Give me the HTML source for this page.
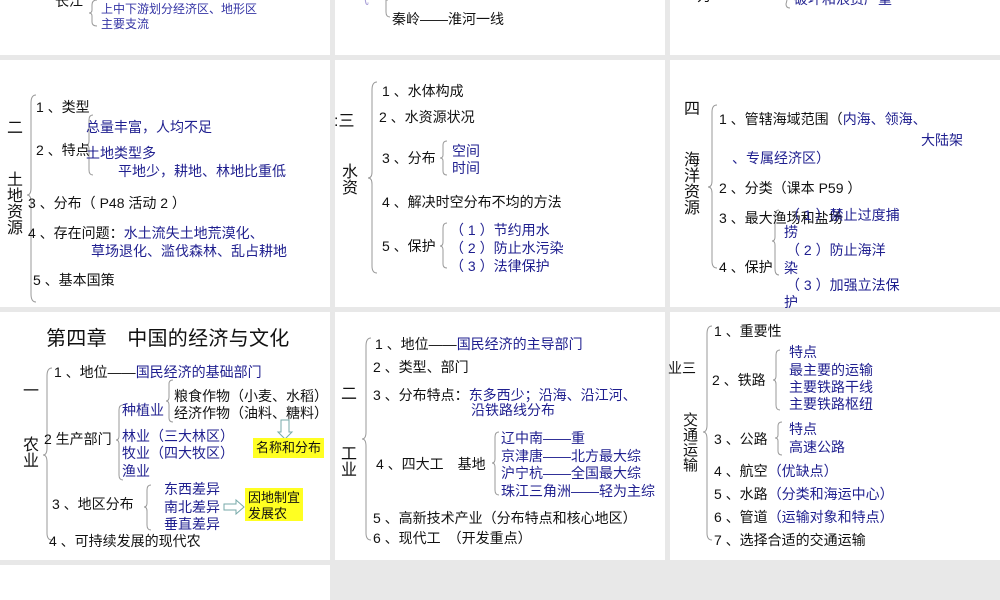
<!DOCTYPE html>
<html><head><meta charset="utf-8"><style>
*{margin:0;padding:0}
body{width:1000px;height:600px;background:#e8e8e8;position:relative;overflow:hidden;font-family:"Liberation Sans","Noto Sans CJK SC",sans-serif;color:#111}
.p{position:absolute;background:#fff;overflow:hidden}
.t{position:absolute;font-size:14px;line-height:16px;white-space:nowrap}
.s{font-size:13px}
.b{color:#1f1f8f}
.v{position:absolute;font-size:16px;line-height:16px;width:18px;white-space:normal;word-break:break-all}
.y{position:absolute;background:#ffff22;font-size:13px;line-height:16px;padding:2px 3px}
svg{position:absolute;left:0;top:0}
</style></head><body>
<div class="p" style="left:0;top:0;width:330px;height:55px"></div>
<div class="p" style="left:335px;top:0;width:330px;height:55px"></div>
<div class="p" style="left:670px;top:0;width:330px;height:55px"></div>
<div class="p" style="left:0;top:60px;width:330px;height:247px"></div>
<div class="p" style="left:335px;top:60px;width:330px;height:247px"></div>
<div class="p" style="left:670px;top:60px;width:330px;height:247px"></div>
<div class="p" style="left:0;top:312px;width:330px;height:248px"></div>
<div class="p" style="left:335px;top:312px;width:330px;height:248px"></div>
<div class="p" style="left:670px;top:312px;width:330px;height:248px"></div>
<div class="p" style="left:0;top:565px;width:330px;height:35px"></div>

<svg width="1000" height="600" fill="none" stroke="#999" stroke-width="1">
<path d="M97 0 Q92 0 92 5 L92 10 Q92 13 89 13 Q92 13 92 16 L92 22 Q92 26 97 26"/>
<path d="M388 0 L386 0 L386 12 Q386 17 390 17"/>
<path d="M787 0 L786 4 Q786 8 790 8"/>
<path d="M36 95 Q31 95 31 103 L31 188 Q31 195 27 195 Q31 195 31 202 L31 294 Q31 302 36 302"/>
<path d="M93 115 Q89 115 89 120 L89 141 Q89 145 86 145 Q89 145 89 149 L89 170 Q89 175 93 175"/>
<path d="M377 82 Q372 82 372 90 L372 172 Q372 178 368 178 Q372 178 372 184 L372 266 Q372 273 377 273"/>
<path d="M447 141 Q443 141 443 145 L443 155 Q443 158 440 158 Q443 158 443 161 L443 171 Q443 175 447 175"/>
<path d="M447 223 Q443 223 443 228 L443 242 Q443 246 440 246 Q443 246 443 250 L443 264 Q443 268 447 268"/>
<path d="M717 105 Q712 105 712 112 L712 181 Q712 187 708 187 Q712 187 712 193 L712 261 Q712 268 717 268"/>
<path d="M779 210 Q775 210 775 216 L775 237 Q775 241 772 241 Q775 241 775 245 L775 269 Q775 275 779 275"/>
<path d="M52 368 Q47 368 47 376 L47 448 Q47 455 43 455 Q47 455 47 462 L47 533 Q47 540 52 540"/>
<path d="M123 405 Q119 405 119 410 L119 436 Q119 440 116 440 Q119 440 119 444 L119 475 Q119 480 123 480"/>
<path d="M173 380 Q169 380 169 384 L169 397 Q169 401 166 401 Q169 401 169 405 L169 418 Q169 422 173 422"/>
<path d="M151 485 Q147 485 147 490 L147 503 Q147 507 144 507 Q147 507 147 511 L147 525 Q147 530 151 530"/>
<path d="M371 338 Q366 338 366 346 L366 432 Q366 439 362 439 Q366 439 366 446 L366 533 Q366 540 371 540"/>
<path d="M499 432 Q495 432 495 437 L495 459 Q495 463 492 463 Q495 463 495 467 L495 490 Q495 495 499 495"/>
<path d="M712 326 Q707 326 707 334 L707 425 Q707 432 703 432 Q707 432 707 439 L707 533 Q707 540 712 540"/>
<path d="M780 350 Q776 350 776 355 L776 376 Q776 380 773 380 Q776 380 776 384 L776 405 Q776 410 780 410"/>
<path d="M782 422 Q778 422 778 426 L778 435 Q778 438 775 438 Q778 438 778 441 L778 451 Q778 455 782 455"/>
<path d="M281 420 L281 432 L278 432 L285 439 L292 432 L289 432 L289 420 Z" stroke="#7aa" fill="#fff"/>
<path d="M224 504 L236 504 L236 500 L244 507 L236 514 L236 510 L224 510 Z" stroke="#7aa" fill="#fff"/>
</svg>

<div class="t" style="left:55px;top:-7px">长江</div>
<div class="t s b" style="left:101px;top:1px;font-size:12px;color:#3535a5">上中下游划分经济区、地形区</div>
<div class="t s b" style="left:101px;top:16px;font-size:12px;color:#3535a5">主要支流</div>
<div class="t" style="left:355px;top:-9px;color:#a9a0d8">气</div>
<div class="t" style="left:392px;top:11px">秦岭——淮河一线</div>
<div class="t" style="left:697px;top:-12px">力</div>
<div class="t b" style="left:794px;top:-9px">破坏和浪费严重</div>

<div class="v" style="left:7px;top:121px">二</div>
<div class="v" style="left:7px;top:173px">土地资源</div>
<div class="t" style="left:36px;top:99px">1 、类型</div>
<div class="t b" style="left:86px;top:119px">总量丰富，人均不足</div>
<div class="t" style="left:36px;top:142px">2 、特点</div>
<div class="t b" style="left:86px;top:145px">土地类型多</div>
<div class="t b" style="left:118px;top:163px">平地少，耕地、林地比重低</div>
<div class="t" style="left:28px;top:195px">3 、分布（ P48 活动 2 ）</div>
<div class="t" style="left:28px;top:225px">4 、存在问题：<span class="b">水土流失土地荒漠化、</span></div>
<div class="t b" style="left:91px;top:243px">草场退化、滥伐森林、乱占耕地</div>
<div class="t" style="left:33px;top:272px">5 、基本国策</div>

<div class="t" style="left:334px;top:114px;font-size:16px">:三</div>
<div class="v" style="left:342px;top:165px">水资</div>
<div class="t" style="left:382px;top:83px">1 、水体构成</div>
<div class="t" style="left:379px;top:109px">2 、水资源状况</div>
<div class="t" style="left:382px;top:150px">3 、分布</div>
<div class="t b" style="left:452px;top:143px">空间</div>
<div class="t b" style="left:452px;top:160px">时间</div>
<div class="t" style="left:382px;top:194px">4 、解决时空分布不均的方法</div>
<div class="t" style="left:382px;top:238px">5 、保护</div>
<div class="t b" style="left:450px;top:222px">（ 1 ）节约用水</div>
<div class="t b" style="left:450px;top:240px">（ 2 ）防止水污染</div>
<div class="t b" style="left:450px;top:258px">（ 3 ）法律保护</div>

<div class="v" style="left:684px;top:102px">四</div>
<div class="v" style="left:684px;top:153px">海洋资源</div>
<div class="t" style="left:719px;top:111px">1 、管辖海域范围（<span class="b">内海、领海、</span></div>
<div class="t b" style="left:921px;top:132px">大陆架</div>
<div class="t b" style="left:732px;top:150px">、专属经济区）</div>
<div class="t" style="left:719px;top:180px">2 、分类（课本 P59 ）</div>
<div class="t" style="left:719px;top:210px">3 、最大渔场和盐场</div>
<div class="t b" style="left:786px;top:207px">（ 1 ）禁止过度捕</div>
<div class="t b" style="left:784px;top:224px">捞</div>
<div class="t b" style="left:786px;top:242px">（ 2 ）防止海洋</div>
<div class="t b" style="left:784px;top:260px">染</div>
<div class="t" style="left:719px;top:259px">4 、保护</div>
<div class="t b" style="left:786px;top:277px">（ 3 ）加强立法保</div>
<div class="t b" style="left:784px;top:294px">护</div>

<div class="t" style="left:46px;top:327px;font-size:20px;line-height:24px;letter-spacing:0.3px">第四章　中国的经济与文化</div>
<div class="v" style="left:23px;top:384px">一</div>
<div class="v" style="left:23px;top:438px">农业</div>
<div class="t" style="left:54px;top:364px">1 、地位——<span class="b">国民经济的基础部门</span></div>
<div class="t b" style="left:122px;top:402px">种植业</div>
<div class="t" style="left:174px;top:388px">粮食作物（小麦、水稻）</div>
<div class="t" style="left:174px;top:405px">经济作物（油料、糖料）</div>
<div class="t" style="left:44px;top:431px">2 生产部门</div>
<div class="t b" style="left:122px;top:428px">林业（三大林区）</div>
<div class="t b" style="left:122px;top:445px">牧业（四大牧区）</div>
<div class="t b" style="left:122px;top:463px">渔业</div>
<div class="y" style="left:253px;top:438px;width:65px">名称和分布</div>
<div class="t" style="left:52px;top:496px">3 、地区分布</div>
<div class="t b" style="left:164px;top:481px">东西差异</div>
<div class="t b" style="left:164px;top:499px">南北差异</div>
<div class="t b" style="left:164px;top:516px">垂直差异</div>
<div class="y" style="left:245px;top:488px;width:52px;height:29px">因地制宜<br>发展农</div>
<div class="t" style="left:49px;top:533px">4 、可持续发展的现代农</div>

<div class="v" style="left:341px;top:387px">二</div>
<div class="v" style="left:341px;top:447px">工业</div>
<div class="t" style="left:375px;top:336px">1 、地位——<span class="b">国民经济的主导部门</span></div>
<div class="t" style="left:373px;top:359px">2 、类型、部门</div>
<div class="t" style="left:373px;top:387px">3 、分布特点：<span class="b">东多西少；沿海、沿江河、</span></div>
<div class="t b" style="left:471px;top:402px">沿铁路线分布</div>
<div class="t" style="left:376px;top:456px">4 、四大工　基地</div>
<div class="t b" style="left:501px;top:430px">辽中南——重</div>
<div class="t b" style="left:501px;top:448px">京津唐——北方最大综</div>
<div class="t b" style="left:501px;top:465px">沪宁杭——全国最大综</div>
<div class="t b" style="left:501px;top:483px">珠江三角洲——轻为主综</div>
<div class="t" style="left:373px;top:510px">5 、高新技术产业（分布特点和核心地区）</div>
<div class="t" style="left:373px;top:530px">6 、现代工　（开发重点）</div>

<div class="t" style="left:668px;top:360px">业三</div>
<div class="v" style="left:683px;top:413px;font-size:15px;line-height:15px">交通运输</div>
<div class="t" style="left:714px;top:323px">1 、重要性</div>
<div class="t" style="left:712px;top:372px">2 、铁路</div>
<div class="t b" style="left:789px;top:344px">特点</div>
<div class="t b" style="left:789px;top:362px">最主要的运输</div>
<div class="t b" style="left:789px;top:379px">主要铁路干线</div>
<div class="t b" style="left:789px;top:396px">主要铁路枢纽</div>
<div class="t" style="left:714px;top:431px">3 、公路</div>
<div class="t b" style="left:789px;top:421px">特点</div>
<div class="t b" style="left:789px;top:439px">高速公路</div>
<div class="t" style="left:714px;top:463px">4 、航空<span class="b">（优缺点）</span></div>
<div class="t" style="left:714px;top:486px">5 、水路<span class="b">（分类和海运中心）</span></div>
<div class="t" style="left:714px;top:509px">6 、管道<span class="b">（运输对象和特点）</span></div>
<div class="t" style="left:714px;top:532px">7 、选择合适的交通运输</div>
</body></html>
